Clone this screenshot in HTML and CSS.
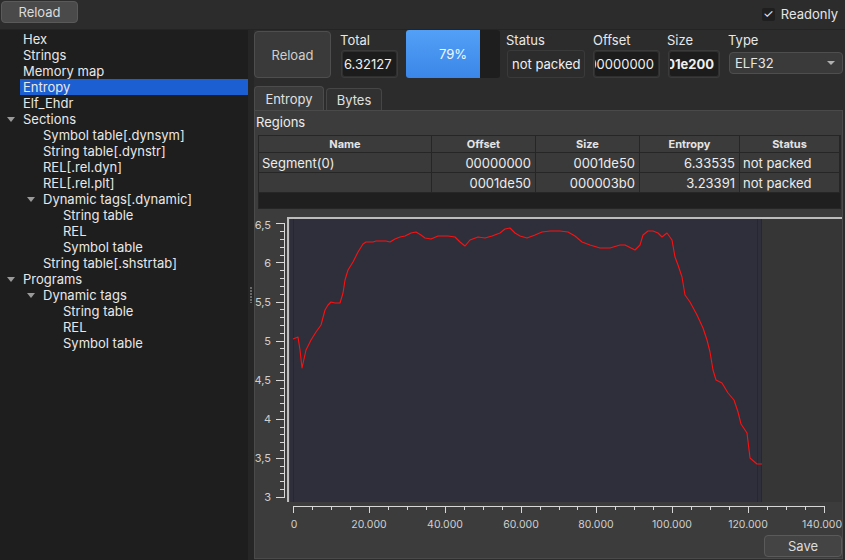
FILE: index.html
```html
<!DOCTYPE html>
<html>
<head>
<meta charset="utf-8">
<link rel="stylesheet" href="styles.css">
</head>
<body>
<div class="app">
  <div class="topbar">
    <button class="btn btn-top">Reload</button>
    <label class="check"><span class="box">✓</span><span>Readonly</span></label>
  </div>
  <div class="main">
    <div class="tree">
      <div class="row l0"><span class="tw"></span><span class="lbl">Hex</span></div>
      <div class="row l0"><span class="tw"></span><span class="lbl">Strings</span></div>
      <div class="row l0"><span class="tw"></span><span class="lbl">Memory map</span></div>
      <div class="row l0 sel"><span class="tw"></span><span class="lbl">Entropy</span></div>
      <div class="row l0"><span class="tw"></span><span class="lbl">Elf_Ehdr</span></div>
      <div class="row l0"><span class="tw open"></span><span class="lbl">Sections</span></div>
      <div class="row l1"><span class="tw"></span><span class="lbl">Symbol table[.dynsym]</span></div>
      <div class="row l1"><span class="tw"></span><span class="lbl">String table[.dynstr]</span></div>
      <div class="row l1"><span class="tw"></span><span class="lbl">REL[.rel.dyn]</span></div>
      <div class="row l1"><span class="tw"></span><span class="lbl">REL[.rel.plt]</span></div>
      <div class="row l1"><span class="tw open"></span><span class="lbl">Dynamic tags[.dynamic]</span></div>
      <div class="row l2"><span class="tw"></span><span class="lbl">String table</span></div>
      <div class="row l2"><span class="tw"></span><span class="lbl">REL</span></div>
      <div class="row l2"><span class="tw"></span><span class="lbl">Symbol table</span></div>
      <div class="row l1"><span class="tw"></span><span class="lbl">String table[.shstrtab]</span></div>
      <div class="row l0"><span class="tw open"></span><span class="lbl">Programs</span></div>
      <div class="row l1"><span class="tw open"></span><span class="lbl">Dynamic tags</span></div>
      <div class="row l2"><span class="tw"></span><span class="lbl">String table</span></div>
      <div class="row l2"><span class="tw"></span><span class="lbl">REL</span></div>
      <div class="row l2"><span class="tw"></span><span class="lbl">Symbol table</span></div>
    </div>
    <div class="splitter"><span class="grip"></span></div>
    <div class="right">
      <div class="controls">
        <button class="btn btn-big">Reload</button>
        <div class="grp g-total">
          <div class="glabel">Total</div>
          <div class="le w-total"><div class="le-in">6.32127</div></div>
        </div>
        <div class="progress"><div class="fill" style="width:79%"></div><span class="ptext">79%</span></div>
        <div class="grp g-status">
          <div class="glabel">Status</div>
          <div class="ro w-status">not packed</div>
        </div>
        <div class="grp g-offset">
          <div class="glabel">Offset</div>
          <div class="le w-offset"><div class="le-in end"><span>00000000</span></div></div>
        </div>
        <div class="grp g-size">
          <div class="glabel">Size</div>
          <div class="le w-size"><div class="le-in end bold"><span>0001e200</span></div></div>
        </div>
        <div class="grp g-type">
          <div class="glabel">Type</div>
          <div class="combo"><span>ELF32</span><span class="arrow"></span></div>
        </div>
      </div>
      <div class="tabs">
        <div class="tab active">Entropy</div>
        <div class="tab">Bytes</div>
      </div>
      <div class="panel">
        <div class="regions">Regions</div>
        <div class="table">
          <div class="hd">Name</div><div class="hd">Offset</div><div class="hd">Size</div><div class="hd">Entropy</div><div class="hd">Status</div>
          <div class="td">Segment(0)</div><div class="td num">00000000</div><div class="td num">0001de50</div><div class="td num">6.33535</div><div class="td">not packed</div>
          <div class="td"></div><div class="td num">0001de50</div><div class="td num">000003b0</div><div class="td num">3.23391</div><div class="td">not packed</div>
        </div>
        <svg class="chart" width="587" height="324" viewBox="255 210 587 324">
          <rect x="762" y="218" width="80" height="284" fill="#363636"/>
          <rect x="290" y="218" width="472" height="284" fill="#2e2f3b"/>
          <rect x="287" y="217" width="555" height="2" fill="#bdbdbd"/>
          <rect x="287" y="217" width="2" height="285" fill="#bdbdbd"/>
          <path d="M293.5 219V502M757.5 219V502M761.5 219V502" stroke="#1f1f6e" stroke-width="1" fill="none"/>
          <polyline fill="none" stroke="#ff1010" stroke-width="1.1" stroke-linejoin="round" points="293,339 298,337 300,350 302,368 306,350 311,340 316,332 321,325 325,310 328,305 331,302 335,303 340,303 343,293 345,280 348,270 353,262 358,252 363,244 366,242 373,242 376,241 386,241 390,242 395,239 400,237 405,236 411,233 416,232 421,235 425,238 431,239 438,236 448,236 455,237 460,242 465,246 470,240 478,237 485,238 492,236 500,233 505,229 510,228 515,233 520,236 527,238 535,235 542,232 550,231 560,231 568,232 575,236 582,242 590,245 600,248 610,248 620,245 625,245 635,250 640,245 643,235 648,231 653,231 658,233 662,237 667,233 672,240 675,257 678,265 682,277 685,295 690,302 697,315 703,328 707,340 710,352 713,370 716,380 722,383 728,393 734,400 738,412 741,424 747,433 750,458 757,464 762,464"/>
          <g stroke="#d8d8d8" stroke-width="1" fill="none">
            <path d="M284.5 223V498"/>
            <path d="M276 497.5h8M276 458.5h8M276 419.5h8M276 380.5h8M276 341.5h8M276 302.5h8M276 262.5h8M276 223.5h8"/>
            <path d="M280 489.5h4M280 481.5h4M280 473.5h4M280 466.5h4M280 450.5h4M280 442.5h4M280 434.5h4M280 427.5h4M280 411.5h4M280 403.5h4M280 395.5h4M280 388.5h4M280 372.5h4M280 364.5h4M280 356.5h4M280 348.5h4M280 333.5h4M280 325.5h4M280 317.5h4M280 309.5h4M280 294.5h4M280 286.5h4M280 278.5h4M280 270.5h4M280 255.5h4M280 247.5h4M280 239.5h4M280 231.5h4"/>
            <path d="M293 506.5H825"/>
            <path d="M293.5 506v7M369.5 506v7M445.5 506v7M521.5 506v7M596.5 506v7M672.5 506v7M748.5 506v7M824.5 506v7"/>
            <path d="M312.5 506v4M331.5 506v4M350.5 506v4M388.5 506v4M407.5 506v4M426.5 506v4M464.5 506v4M483.5 506v4M502.5 506v4M540.5 506v4M559.5 506v4M577.5 506v4M615.5 506v4M634.5 506v4M653.5 506v4M691.5 506v4M710.5 506v4M729.5 506v4M767.5 506v4M786.5 506v4M805.5 506v4"/>
          </g>
          <g class="ylab" text-anchor="end">
            <text x="271" y="229">6,5</text>
            <text x="271" y="267">6</text>
            <text x="271" y="306">5,5</text>
            <text x="271" y="345">5</text>
            <text x="271" y="384">4,5</text>
            <text x="271" y="423">4</text>
            <text x="271" y="462">3,5</text>
            <text x="271" y="501">3</text>
          </g>
          <g class="xlab" text-anchor="middle">
            <text x="294" y="528">0</text>
            <text x="369" y="528">20.000</text>
            <text x="445" y="528">40.000</text>
            <text x="521" y="528">60.000</text>
            <text x="596" y="528">80.000</text>
            <text x="672" y="528">100.000</text>
            <text x="748" y="528">120.000</text>
            <text x="822" y="528">140.000</text>
          </g>
        </svg>
        <div class="saverow"><button class="btn btn-save">Save</button></div>
      </div>
    </div>
  </div>
</div>
</body>
</html>
```

FILE: styles.css
```css
* { box-sizing: border-box; }
html, body { margin: 0; padding: 0; }
body {
  width: 845px;
  height: 560px;
  overflow: hidden;
  background: #2c2c2c;
  font-family: Inter, "Noto Sans", sans-serif;
  font-size: 13px;
  color: #e6e6e6;
}
.app { display: flex; flex-direction: column; height: 560px; }

.topbar {
  height: 30px;
  flex: none;
  display: flex;
  justify-content: space-between;
  align-items: flex-start;
  padding: 1px 7px 0 1px;
  border-bottom: 1px solid #242424;
}
.btn {
  font: inherit;
  color: #dcdcdc;
  background: #4a4a4a;
  border: 1px solid #5a5a5a;
  border-radius: 4px;
  padding: 0;
}
.btn-top { width: 77px; height: 22px; }
.check { display: flex; align-items: center; gap: 6px; margin-top: 5px; line-height: 16px; }
.box {
  width: 13px; height: 13px;
  background: #1f1f1f;
  border-radius: 2px;
  display: flex; align-items: center; justify-content: center;
  font-size: 12px; color: #e8e8e8;
}

.main { flex: 1; display: flex; min-height: 0; }
.tree { width: 248px; flex: none; background: #1e1e1e; padding-top: 1px; }
.row { display: flex; height: 16px; line-height: 16px; align-items: center; }
.row.l0 { padding-left: 7px; }
.row.l1 { padding-left: 27px; }
.row.l2 { padding-left: 47px; }
.tw { width: 16px; flex: none; height: 16px; display: flex; align-items: center; }
.tw.open::before {
  content: "";
  width: 0; height: 0;
  border-left: 4px solid transparent;
  border-right: 4px solid transparent;
  border-top: 5px solid #9a9a9a;
}
.lbl { flex: 1; white-space: nowrap; color: #e8e8e8; }
.row.sel .lbl { background: #1c5fd2; margin-left: -3px; padding-left: 3px; }

.splitter {
  width: 6px; flex: none;
  background: #262626;
  display: flex; align-items: center; justify-content: center;
}
.grip {
  width: 2px; height: 16px;
  background: repeating-linear-gradient(#6a6a6a 0 2px, transparent 2px 3px);
}

.right { flex: 1; display: flex; flex-direction: column; padding-right: 2px; }

.controls { height: 56px; flex: none; display: flex; align-items: flex-start; }
.btn-big { width: 77px; height: 47px; margin-top: 1px; background: #3a3a3a; border-color: #4e4e4e; color: #cfcfcf; }
.grp { display: flex; flex-direction: column; }
.glabel { height: 20px; line-height: 20px; color: #e8e8e8; }
.g-total { margin-left: 9px; }
.g-status { margin-left: 6px; }
.g-offset { margin-left: 8px; }
.g-size { margin-left: 7px; }
.g-type { margin-left: 8px; }
.le, .ro, .combo { margin-left: 1px; }
.le {
  height: 28px;
  border: 1px solid #3a3a3a;
  background: #2f2f2f;
  border-radius: 3px;
  padding: 1px;
}
.le-in {
  height: 100%;
  background: #1c1c1c;
  border-radius: 2px;
  display: flex; align-items: center;
  padding: 0 1px;
  overflow: hidden;
  white-space: nowrap;
  color: #f0f0f0;
}
.le-in.end { justify-content: flex-end; padding-right: 4px; }
.le-in.bold { font-weight: 700; }
.w-total { width: 57px; }
.w-offset { width: 67px; margin-left: 0; }
.w-size { width: 52px; }
.ro {
  width: 78px; height: 28px;
  border: 1px solid #3a3a3a;
  border-radius: 3px;
  display: flex; align-items: center;
  padding-left: 4px;
  color: #f0f0f0;
}
.progress {
  position: relative;
  width: 94px; height: 48px;
  margin-left: 8px;
  background: #1e1e1e;
  border-radius: 3px;
  overflow: hidden;
}
.fill { height: 100%; background: linear-gradient(#52a0f7, #3b86e8); }
.ptext {
  position: absolute; left: 0; right: 0; top: 0; bottom: 0;
  display: flex; align-items: center; justify-content: center;
  color: #f4f8ff;
}
.combo {
  width: 114px; height: 22px;
  margin-top: 2px;
  background: #3a3a3a;
  border: 1px solid #4e4e4e;
  border-radius: 4px;
  display: flex; align-items: center; justify-content: space-between;
  padding: 0 7px 0 5px;
}
.arrow {
  width: 0; height: 0;
  border-left: 4px solid transparent;
  border-right: 4px solid transparent;
  border-top: 4px solid #b0b0b0;
}

.tabs { height: 24px; flex: none; display: flex; align-items: flex-end; gap: 2px; }
.tab {
  height: 22px;
  width: 56px;
  background: #313131;
  border: 1px solid #464646;
  border-bottom: none;
  border-radius: 4px 4px 0 0;
  display: flex; align-items: center; justify-content: center;
  color: #e0e0e0;
}
.tab.active { height: 24px; width: 70px; background: #3b3b3b; border-color: #4c4c4c; }

.panel {
  height: 449px;
  flex: none;
  background: #3c3c3c;
  border: 1px solid #4a4a4a;
  display: flex; flex-direction: column;
}
.regions { height: 24px; line-height: 22px; padding-left: 1px; flex: none; color: #ececec; }
.table {
  margin-left: 3px;
  width: 583px; height: 74px;
  flex: none;
  border: 1px solid #262626;
  background: #1f1f1f;
  display: grid;
  grid-template-columns: 173px 104px 104px 100px 100px;
  grid-template-rows: 17px 20px 20px;
  align-content: start;
}
.hd {
  background: #3b3b3b;
  border-right: 1px solid #262626;
  border-bottom: 1px solid #262626;
  font-size: 11px; font-weight: 700;
  display: flex; align-items: center; justify-content: center;
  color: #e4e4e4;
}
.td {
  background: #3a3a3a;
  border-right: 1px solid #262626;
  border-bottom: 1px solid #262626;
  display: flex; align-items: center;
  padding: 0 3px;
  white-space: nowrap;
  color: #ececec;
}
.td.num { justify-content: flex-end; padding-right: 4px; }
.chart { display: block; margin-top: 1px; flex: none; }
.ylab text, .xlab text { font-family: Inter, "Noto Sans", sans-serif; font-size: 11px; fill: #cfcfcf; }
.xlab text { font-size: 10.5px; }
.saverow { height: 24px; flex: none; display: flex; justify-content: flex-end; align-items: flex-start; padding-top: 1px; }
.btn-save { width: 78px; height: 22px; background: #444444; border-color: #5a5a5a; }
```
